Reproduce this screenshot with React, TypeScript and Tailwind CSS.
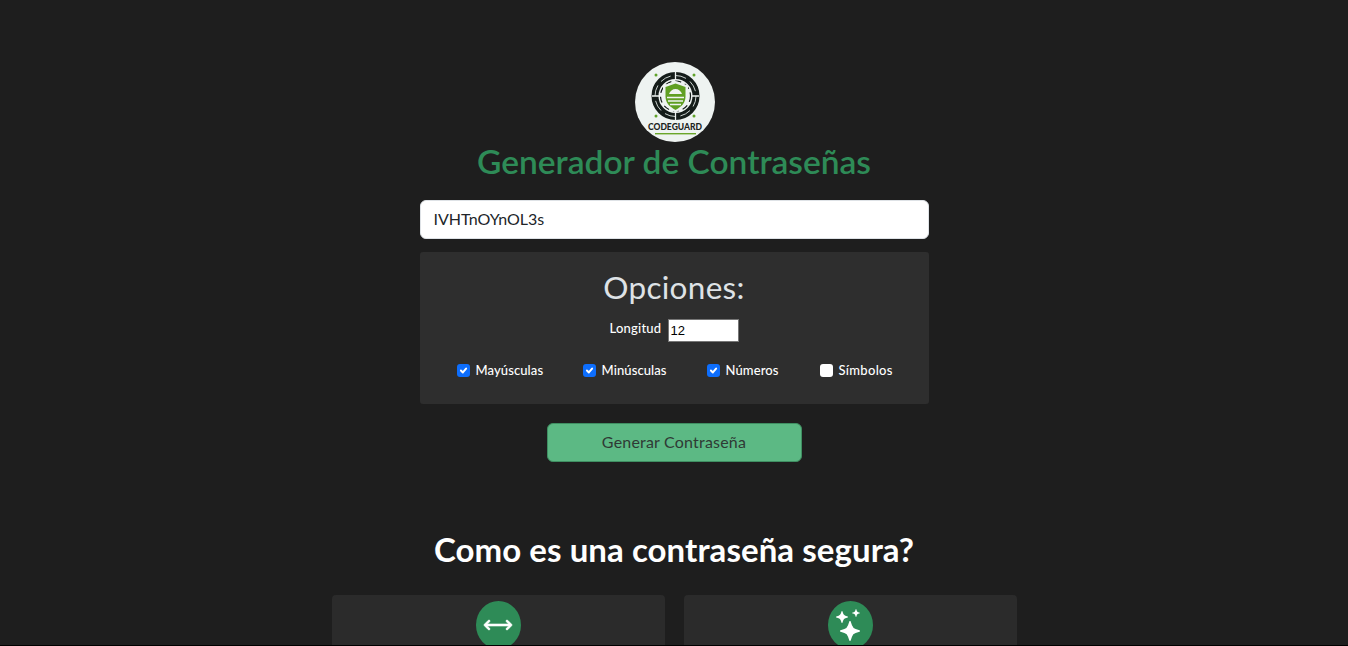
const font = "font-['Lato','Noto_Sans',sans-serif]";

function Logo() {
  return (
    <div className="w-20 h-20 rounded-full bg-[#eef3f1] overflow-hidden shrink-0 ml-px">
      <svg viewBox="0 0 80 80" className="w-full h-full">
        <circle cx="40.500" cy="34" r="20.500" fill="none" stroke="#141c19" strokeWidth="7" />
        <circle cx="40.500" cy="34" r="20.500" fill="none" stroke="#dfe7e3" strokeWidth="0.900" strokeDasharray="11 5" />
        <circle cx="40.500" cy="34" r="15" fill="none" stroke="#141c19" strokeWidth="1.200" strokeDasharray="6 4" />
        <path d="M40.500 10v8M40.500 50v8M17 34h7M57 34h7" stroke="#eef3f1" strokeWidth="1.300" />
        <path d="M40.500 19l12.500 4.500v11c0 8-5 12-12.500 16-7.500-4-12.500-8-12.500-16v-11z" fill="#eef3f1" />
        <path d="M40.500 21.500l10 3.500v9.500c0 6.500-4 10-10 13.500-6-3.500-10-7-10-13.500v-9.500z" fill="#5f9f22" />
        <path d="M32 35.500h17M33 39h15M35 42.500h11" stroke="#eef3f1" strokeWidth="1.500" />
        <path d="M34 32c1-3 3.500-5 6.500-5s5.500 2 6.500 5z" fill="#eef3f1" />
        <circle cx="21" cy="13" r="1.500" fill="#5fa32a" />
        <circle cx="59" cy="13" r="1.500" fill="#5fa32a" />
        <circle cx="21" cy="54" r="1.500" fill="#5fa32a" />
        <circle cx="59" cy="54" r="1.500" fill="#5fa32a" />
        <text x="40" y="68" textAnchor="middle" fontSize="9" fontWeight="900" fill="#1b2421" fontFamily="Lato, sans-serif" textLength="54" lengthAdjust="spacingAndGlyphs">CODEGUARD</text>
        <rect x="20" y="71" width="41" height="1.400" fill="#6aa62a" />
      </svg>
    </div>
  );
}

function Check({ label, checked, className }: { label: string; checked: boolean; className: string }) {
  return (
    <label className={`flex items-center gap-[6px] text-[13px] font-medium tracking-[0.1px] text-white ${className}`}>
      <span className={`w-[13px] h-[13px] rounded-[3px] flex items-center justify-center ${checked ? "bg-[#0d6efd]" : "bg-white"}`}>
        {checked && (
          <svg viewBox="0 0 20 20" className="w-[13px] h-[13px]">
            <path d="M6 10l3 3 5-6" fill="none" stroke="#fff" strokeWidth="3" strokeLinecap="round" strokeLinejoin="round" />
          </svg>
        )}
      </span>
      <span>{label}</span>
    </label>
  );
}

export default function App() {
  return (
    <div className={`h-[646px] overflow-hidden bg-[#1e1e1e] border-b border-black flex flex-col items-center pt-[62px] ${font}`}>
      <Logo />
      <h1 className="shrink-0 text-[33.500px] leading-[38px] mb-[2px] font-semibold text-[#2e8b57]">Generador de Contraseñas</h1>

      <div className="shrink-0 w-[509px] h-[39px] mt-[18px] pb-[2px] bg-white rounded-[6px] border border-[#dee2e6] flex items-center px-[13px] text-[16px] text-[#212529]">
        IVHTnOYnOL3s
      </div>

      <div className="shrink-0 w-[509px] h-[152px] mt-[13px] bg-[#2e2e2e] rounded-[3px] flex flex-col items-center pt-[15px]">
        <h2 className="text-[31.500px] leading-[40px] font-normal tracking-[0.3px] text-[#dee2e6]">Opciones:</h2>
        <div className="flex items-center gap-[6px] mt-[12px] text-[13px] font-medium text-white">
          <span className="w-[52px] -mt-[3px] tracking-[0.2px]">Longitud</span>
          <div className="w-[71px] h-[23px] bg-white border border-[#767676] pl-[2px] text-[13px] font-normal leading-[21px] text-black font-['Liberation_Sans',sans-serif]">
            12
          </div>
        </div>
        <div className="w-full flex mt-[19px] pl-[37px]">
          <Check label="Mayúsculas" checked className="w-[126px]" />
          <Check label="Minúsculas" checked className="w-[124px]" />
          <Check label="Números" checked className="w-[113px]" />
          <Check label="Símbolos" checked={false} className="w-[100px] tracking-[0.3px]" />
        </div>
      </div>

      <button className="shrink-0 w-[255px] h-[39px] mt-[19px] pb-[2px] bg-[#5cb984] border border-[#3f8f62] rounded-[6px] text-[16px] text-[#2f3a35] tracking-[0.2px]">
        Generar Contraseña
      </button>

      <h2 className="shrink-0 text-[33px] leading-[38px] mb-[2px] font-bold tracking-[0.07px] text-white mt-[68px]">Como es una contraseña segura?</h2>

      <div className="shrink-0 flex gap-[19px] mt-[25px]">
        <div className="w-[333px] h-[120px] bg-[#2b2b2b] rounded-[4px] flex justify-center pt-[6px]">
          <div className="w-[45px] h-[48px] rounded-[50%] bg-[#2e8b57] flex items-center justify-center text-white">
            <svg viewBox="0 0 16 16" fill="currentColor" stroke="currentColor" strokeWidth="0.3" className="w-8 h-8">
              <path d="M1.146 8.354a.5.5 0 0 1 0-.708l2-2a.5.5 0 1 1 .708.708L2.707 7.5h10.586l-1.147-1.146a.5.5 0 0 1 .708-.708l2 2a.5.5 0 0 1 0 .708l-2 2a.5.5 0 0 1-.708-.708L13.293 8.5H2.707l1.147 1.146a.5.5 0 0 1-.708.708l-2-2Z" />
            </svg>
          </div>
        </div>
        <div className="w-[333px] h-[120px] bg-[#2b2b2b] rounded-[4px] flex justify-center pt-[6px]">
          <div className="w-[45px] h-[48px] rounded-[50%] bg-[#2e8b57] flex items-center justify-center text-white">
            <svg viewBox="0 0 16 16" fill="currentColor" className="w-8 h-8">
              <path d="M7.657 6.247c.11-.33.576-.33.686 0l.645 1.937a2.89 2.89 0 0 0 1.829 1.828l1.936.645c.33.11.33.576 0 .686l-1.937.645a2.89 2.89 0 0 0-1.828 1.829l-.645 1.936a.361.361 0 0 1-.686 0l-.645-1.937a2.89 2.89 0 0 0-1.828-1.828l-1.937-.645a.361.361 0 0 1 0-.686l1.937-.645a2.89 2.89 0 0 0 1.828-1.828l.645-1.937zM3.794 1.148a.217.217 0 0 1 .412 0l.387 1.162c.173.518.579.924 1.097 1.097l1.162.387a.217.217 0 0 1 0 .412l-1.162.387A1.734 1.734 0 0 0 4.593 5.69l-.387 1.162a.217.217 0 0 1-.412 0L3.407 5.69A1.734 1.734 0 0 0 2.31 4.593l-1.162-.387a.217.217 0 0 1 0-.412l1.162-.387A1.734 1.734 0 0 0 3.407 2.31l.387-1.162zM10.863.099a.145.145 0 0 1 .274 0l.258.774c.115.346.386.617.732.732l.774.258a.145.145 0 0 1 0 .274l-.774.258a1.156 1.156 0 0 0-.732.732l-.258.774a.145.145 0 0 1-.274 0l-.258-.774a1.156 1.156 0 0 0-.732-.732L9.1 2.137a.145.145 0 0 1 0-.274l.774-.258c.346-.115.617-.386.732-.732L10.863.1z" />
            </svg>
          </div>
        </div>
      </div>
    </div>
  );
}
